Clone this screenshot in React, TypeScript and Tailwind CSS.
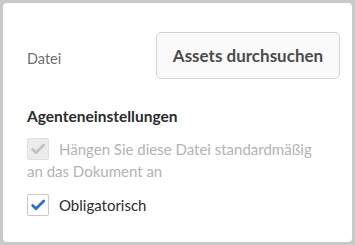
import React from 'react';

const Check: React.FC<{ color: string }> = ({ color }) => (
  <svg viewBox="0 0 22 22" className="w-[18px] h-[18px]">
    <path d="M4.5 11.5 L8.5 15.5 L18 6" fill="none" stroke={color} strokeWidth="3.4" strokeLinecap="round" strokeLinejoin="round" />
  </svg>
);

const App: React.FC = () => {
  return (
    <div className="w-[355px] h-[245px] bg-[#c9c9c9] p-[3px] font-['Lato',sans-serif]">
      <div className="w-[349px] h-[239px] bg-white rounded-[4px] pl-[24px] pr-[12px] pt-[29px]">
        <div className="flex items-center justify-between">
          <span className="text-[14.5px] text-[#6e6e6e] pt-[6px]">Datei</span>
          <button className="h-[47px] w-[184px] rounded-[5px] border border-[#d3d3d3] bg-[#fafafa] text-[17px] font-bold text-[#4b4b4b]">
            Assets durchsuchen
          </button>
        </div>
        <h3 className="mt-[27px] text-[15.5px] font-bold text-[#2c2c2c] leading-[20px]">Agenteneinstellungen</h3>
        <div className="mt-[12px] w-[296px] text-[15px] leading-[22px] text-[#b3b3b3]">
          <span className="inline-flex align-top items-center justify-center w-[22px] h-[22px] rounded-[2px] bg-[#ececec] border border-[#e0e0e0] mr-[10px]">
            <Check color="#c2c2c2" />
          </span>
          Hängen Sie diese Datei standardmäßig an das Dokument an
        </div>
        <label className="mt-[12px] flex items-center gap-[10px] text-[15px] text-[#2c2c2c]">
          <span className="inline-flex items-center justify-center w-[22px] h-[22px] rounded-[2px] bg-white border border-[#c8c8c8]">
            <Check color="#2d6fd0" />
          </span>
          Obligatorisch
        </label>
      </div>
    </div>
  );
};

export default App;
